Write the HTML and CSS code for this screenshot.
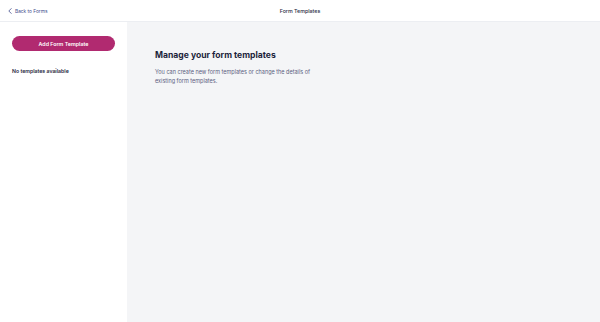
FILE: index.html
```html
<!DOCTYPE html>
<html lang="en">
<head>
  <meta charset="UTF-8" />
  <meta name="viewport" content="width=device-width, initial-scale=1" />
  <title>Form Templates</title>
  <link rel="stylesheet" href="styles.css">
</head>
<body>
  <header class="top-bar">
    <a class="back-link" href="#">
      <svg class="back-icon" viewBox="0 0 6 10" width="4" height="6">
        <path d="M5 1 L1 5 L5 9" fill="none" stroke="currentColor" stroke-width="1.3" stroke-linecap="round" stroke-linejoin="round"/>
      </svg>
      Back to Forms
    </a>
    <div class="page-title">Form Templates</div>
    <div class="top-spacer"></div>
  </header>

  <div class="layout">
    <aside class="sidebar">
      <button class="add-button">Add Form Template</button>
      <div class="empty-note">No templates available</div>
    </aside>

    <main class="content">
      <h1 class="content-title">Manage your form templates</h1>
      <p class="content-text">
        You can create new form templates or change the details of<br>
        existing form templates.
      </p>
    </main>
  </div>
</body>
</html>
```

FILE: styles.css
```css
html, body {
  margin: 0;
  padding: 0;
  height: 100%;
  font-family: 'Inter', 'Noto Sans', sans-serif;
  background: #ffffff;
  color: #1f2240;
}

body {
  display: flex;
  flex-direction: column;
}

.top-bar {
  height: 21px;
  flex-shrink: 0;
  display: flex;
  align-items: center;
  padding: 0 8px;
  border-bottom: 1px solid #eceef2;
  background: #ffffff;
}

.back-link {
  flex: 1;
  display: flex;
  align-items: center;
  gap: 3px;
  font-size: 4.8px;
  color: #3d4a8a;
  text-decoration: none;
}

.back-icon {
  color: #3d4a8a;
}

.page-title {
  font-size: 5.3px;
  font-weight: 500;
  color: #2a2d45;
}

.top-spacer {
  flex: 1;
}

.layout {
  flex: 1;
  display: flex;
}

.sidebar {
  width: 103px;
  flex-shrink: 0;
  padding: 14px 12px;
  background: #ffffff;
}

.add-button {
  display: block;
  width: 100%;
  height: 15px;
  border: none;
  border-radius: 8px;
  background: #b12a70;
  color: #ffffff;
  font-family: inherit;
  font-size: 5.3px;
  font-weight: 600;
  cursor: pointer;
}

.empty-note {
  margin-top: 17px;
  font-size: 5.2px;
  font-weight: 600;
  color: #24263d;
}

.content {
  flex: 1;
  background: #f4f5f7;
  padding: 28px 28px;
}

.content-title {
  margin: 0;
  font-size: 8.6px;
  font-weight: 700;
  color: #1c1f3b;
}

.content-text {
  margin: 8px 0 0;
  font-size: 5.5px;
  line-height: 9px;
  color: #5b6080;
}
```
